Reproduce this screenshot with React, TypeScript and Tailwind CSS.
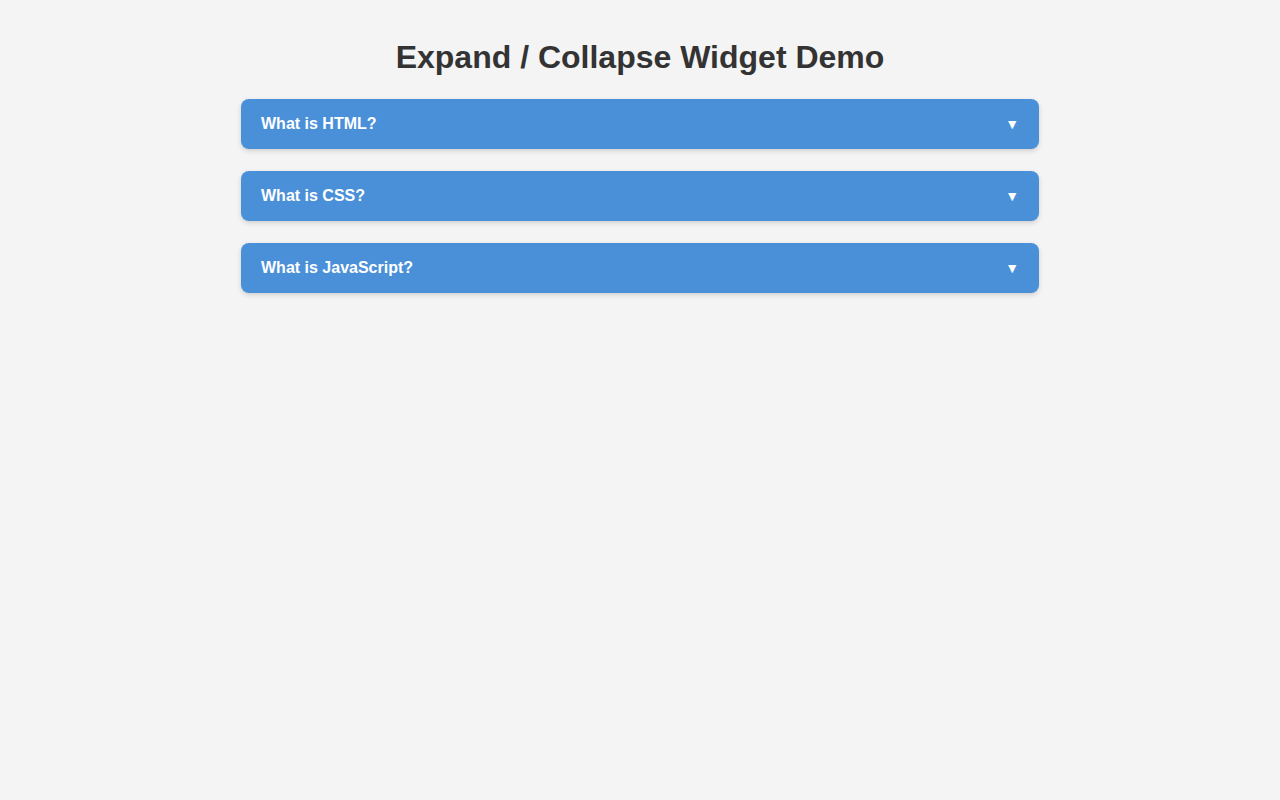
const items = ['What is HTML?', 'What is CSS?', 'What is JavaScript?'];

export default function App() {
  return (
    <div className="min-h-screen bg-[#f4f4f4] pt-[39px] font-['Liberation_Sans',Arial,sans-serif]">
      <h1 className="text-center text-[32px] leading-[37px] font-bold text-[#333]">
        Expand / Collapse Widget Demo
      </h1>
      <div className="mx-auto mt-[23px] flex w-[798px] flex-col gap-[22px]">
        {items.map((q) => (
          <button
            key={q}
            className="flex h-[50px] w-full items-center justify-between rounded-lg bg-[#4a90d9] px-5 text-left text-base font-bold text-white shadow-[0_2px_5px_rgba(0,0,0,0.15)]"
          >
            <span>{q}</span>
            <span className="text-[14px] leading-none">▼</span>
          </button>
        ))}
      </div>
    </div>
  );
}
